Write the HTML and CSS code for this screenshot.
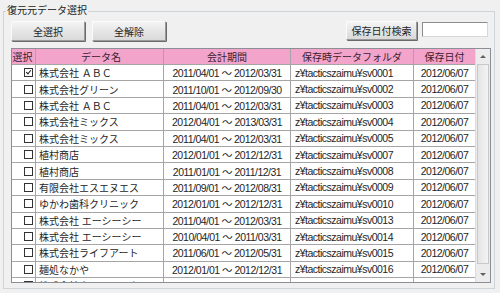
FILE: index.html
```html
<!DOCTYPE html>
<html lang="ja">
<head>
<meta charset="utf-8">
<link rel="stylesheet" href="styles.css">
</head>
<body>
<fieldset class="group">
  <legend class="group-title">復元元データ選択</legend>
  <div class="toolbar">
    <button class="btn btn-wide">全選択</button>
    <button class="btn btn-wide">全解除</button>
    <div class="spacer"></div>
    <button class="btn btn-search">保存日付検索</button>
    <div class="search-input"></div>
  </div>
  <div class="grid">
    <div class="grid-body">
      <div class="row head">
        <div class="cell c-sel">選択</div>
        <div class="cell c-name">データ名</div>
        <div class="cell c-period">会計期間</div>
        <div class="cell c-folder center">保存時データフォルダ</div>
        <div class="cell c-date">保存日付</div>
      </div>
      <div class="row"><div class="cell c-sel"><span class="chk on"></span></div><div class="cell c-name">株式会社 ＡＢＣ</div><div class="cell c-period num">2011/04/01 ～ 2012/03/31</div><div class="cell c-folder num">z¥tacticszaimu¥sv0001</div><div class="cell c-date num">2012/06/07</div></div>
      <div class="row"><div class="cell c-sel"><span class="chk"></span></div><div class="cell c-name">株式会社グリーン</div><div class="cell c-period num">2011/10/01 ～ 2012/09/30</div><div class="cell c-folder num">z¥tacticszaimu¥sv0002</div><div class="cell c-date num">2012/06/07</div></div>
      <div class="row"><div class="cell c-sel"><span class="chk"></span></div><div class="cell c-name">株式会社 ＡＢＣ</div><div class="cell c-period num">2011/04/01 ～ 2012/03/31</div><div class="cell c-folder num">z¥tacticszaimu¥sv0003</div><div class="cell c-date num">2012/06/07</div></div>
      <div class="row"><div class="cell c-sel"><span class="chk"></span></div><div class="cell c-name">株式会社ミックス</div><div class="cell c-period num">2012/04/01 ～ 2013/03/31</div><div class="cell c-folder num">z¥tacticszaimu¥sv0004</div><div class="cell c-date num">2012/06/07</div></div>
      <div class="row"><div class="cell c-sel"><span class="chk"></span></div><div class="cell c-name">株式会社ミックス</div><div class="cell c-period num">2011/04/01 ～ 2012/03/31</div><div class="cell c-folder num">z¥tacticszaimu¥sv0005</div><div class="cell c-date num">2012/06/07</div></div>
      <div class="row"><div class="cell c-sel"><span class="chk"></span></div><div class="cell c-name">植村商店</div><div class="cell c-period num">2012/01/01 ～ 2012/12/31</div><div class="cell c-folder num">z¥tacticszaimu¥sv0007</div><div class="cell c-date num">2012/06/07</div></div>
      <div class="row"><div class="cell c-sel"><span class="chk"></span></div><div class="cell c-name">植村商店</div><div class="cell c-period num">2011/01/01 ～ 2011/12/31</div><div class="cell c-folder num">z¥tacticszaimu¥sv0008</div><div class="cell c-date num">2012/06/07</div></div>
      <div class="row"><div class="cell c-sel"><span class="chk"></span></div><div class="cell c-name">有限会社エスエヌエス</div><div class="cell c-period num">2011/09/01 ～ 2012/08/31</div><div class="cell c-folder num">z¥tacticszaimu¥sv0009</div><div class="cell c-date num">2012/06/07</div></div>
      <div class="row"><div class="cell c-sel"><span class="chk"></span></div><div class="cell c-name">ゆかわ歯科クリニック</div><div class="cell c-period num">2012/01/01 ～ 2012/12/31</div><div class="cell c-folder num">z¥tacticszaimu¥sv0010</div><div class="cell c-date num">2012/06/07</div></div>
      <div class="row"><div class="cell c-sel"><span class="chk"></span></div><div class="cell c-name">株式会社 エーシーシー</div><div class="cell c-period num">2011/04/01 ～ 2012/03/31</div><div class="cell c-folder num">z¥tacticszaimu¥sv0013</div><div class="cell c-date num">2012/06/07</div></div>
      <div class="row"><div class="cell c-sel"><span class="chk"></span></div><div class="cell c-name">株式会社 エーシーシー</div><div class="cell c-period num">2010/04/01 ～ 2011/03/31</div><div class="cell c-folder num">z¥tacticszaimu¥sv0014</div><div class="cell c-date num">2012/06/07</div></div>
      <div class="row"><div class="cell c-sel"><span class="chk"></span></div><div class="cell c-name">株式会社ライフアート</div><div class="cell c-period num">2011/06/01 ～ 2012/05/31</div><div class="cell c-folder num">z¥tacticszaimu¥sv0015</div><div class="cell c-date num">2012/06/07</div></div>
      <div class="row"><div class="cell c-sel"><span class="chk"></span></div><div class="cell c-name">麺処なかや</div><div class="cell c-period num">2012/01/01 ～ 2012/12/31</div><div class="cell c-folder num">z¥tacticszaimu¥sv0016</div><div class="cell c-date num">2012/06/07</div></div>
      <div class="row"><div class="cell c-sel"><span class="chk"></span></div><div class="cell c-name">株式会社ネットワーク</div><div class="cell c-period num">2011/01/01 ～ 2011/12/31</div><div class="cell c-folder num">z¥tacticszaimu¥sv0017</div><div class="cell c-date num">2012/06/07</div></div>
    </div>
    <div class="vscroll">
      <div class="sb-btn"><span class="arrow up"></span></div>
      <div class="sb-track"><div class="sb-thumb"></div></div>
      <div class="sb-btn"><span class="arrow down"></span></div>
    </div>
  </div>
</fieldset>
</body>
</html>
```
FILE: styles.css
```css
html, body {
  margin: 0;
  padding: 0;
}
body {
  width: 500px;
  height: 293px;
  background: #f0f0f0;
  font-family: "Liberation Sans", "Noto Sans CJK JP", sans-serif;
  font-size: 10px;
  color: #1e1e1e;
  overflow: hidden;
}
.group {
  margin: 5px 5px 0 3px;
  padding: 4px 3px 4px 7px;
  border: 1px solid #cfd4d9;
  height: 284px;
  box-sizing: border-box;
  min-width: 0;
}
.group-title {
  margin-left: -5px;
  padding: 0 1px;
  font-size: 10px;
  line-height: 12px;
  color: #222;
}
.toolbar {
  display: flex;
  align-items: flex-start;
  height: 21px;
  margin-right: 3px;
}
.spacer {
  flex: 1;
}
.btn {
  font-family: "Liberation Sans", "Noto Sans CJK JP", sans-serif;
  font-size: 10px;
  color: #1e1e1e;
  padding: 0;
  margin: 0;
  border: 1px solid;
  border-color: #fbfbfb #9a9a9a #9a9a9a #fbfbfb;
  box-shadow: 1px 1px 0 #6a6a6a;
  border-radius: 1px;
  background: linear-gradient(#f4f4f4, #e6e6e6 50%, #d9d9d9);
  height: 20px;
  box-sizing: border-box;
}
.btn-wide {
  width: 74px;
  margin-right: 7px;
}
.btn-search {
  width: 71px;
  height: 19px;
  margin-right: 5px;
}
.search-input {
  width: 66px;
  height: 15px;
  margin-top: 1px;
  box-sizing: border-box;
  background: #fff;
  border: 1px solid;
  border-color: #8d8d8d #d8d8d8 #d8d8d8 #8d8d8d;
}
.grid {
  display: flex;
  margin-top: 6px;
  height: 235px;
  box-sizing: border-box;
  border: 1px solid #8c9096;
  background: #fff;
  overflow: hidden;
}
.grid-body {
  width: 463px;
  overflow: hidden;
}
.row {
  display: flex;
  height: 16.4px;
  box-sizing: border-box;
  border-bottom: 1px solid #a5a5a5;
}
.row.head {
  height: 16px;
  background: #f2a4ca;
  color: #3a2030;
  font-size: 10px;
}
.cell {
  display: flex;
  align-items: center;
  box-sizing: border-box;
  border-right: 1px solid #a5a5a5;
  white-space: nowrap;
  overflow: hidden;
  flex: none;
}
.cell.num {
  font-size: 10.5px;
  letter-spacing: -0.5px;
}
.head .cell {
  justify-content: center;
}
.c-sel {
  width: 24px;
  justify-content: flex-end;
  padding-right: 2px;
}
.c-name {
  width: 128px;
  padding-left: 3px;
}
.c-period {
  width: 127px;
  justify-content: center;
}
.c-folder {
  width: 123px;
  padding-left: 4px;
}
.c-folder.center {
  padding-left: 0;
}
.c-date {
  width: 61px;
  justify-content: center;
  border-right: none;
}
.chk {
  width: 9px;
  height: 9px;
  box-sizing: border-box;
  border: 1px solid #333;
  background: #fff;
  position: relative;
}
.chk.on::after {
  content: "";
  position: absolute;
  left: 2px;
  top: 0px;
  width: 2px;
  height: 4px;
  border: solid #222;
  border-width: 0 1.5px 1.5px 0;
  transform: rotate(40deg);
}
.vscroll {
  width: 15px;
  display: flex;
  flex-direction: column;
  background: #ececec;
  border-left: 1px solid #dcdcdc;
  box-sizing: border-box;
}
.sb-btn {
  height: 15px;
  display: flex;
  align-items: center;
  justify-content: center;
  flex: none;
}
.sb-track {
  flex: 1;
  display: flex;
  flex-direction: column;
  padding: 0 1px;
}
.sb-thumb {
  height: 200px;
  box-sizing: border-box;
  border: 1px solid #c8c8c8;
  background: linear-gradient(90deg, #e4e4e4, #f4f4f4);
}
.arrow {
  width: 0;
  height: 0;
  border-left: 3px solid transparent;
  border-right: 3px solid transparent;
}
.arrow.up {
  border-bottom: 3px solid #606060;
}
.arrow.down {
  border-top: 3px solid #606060;
}
```
